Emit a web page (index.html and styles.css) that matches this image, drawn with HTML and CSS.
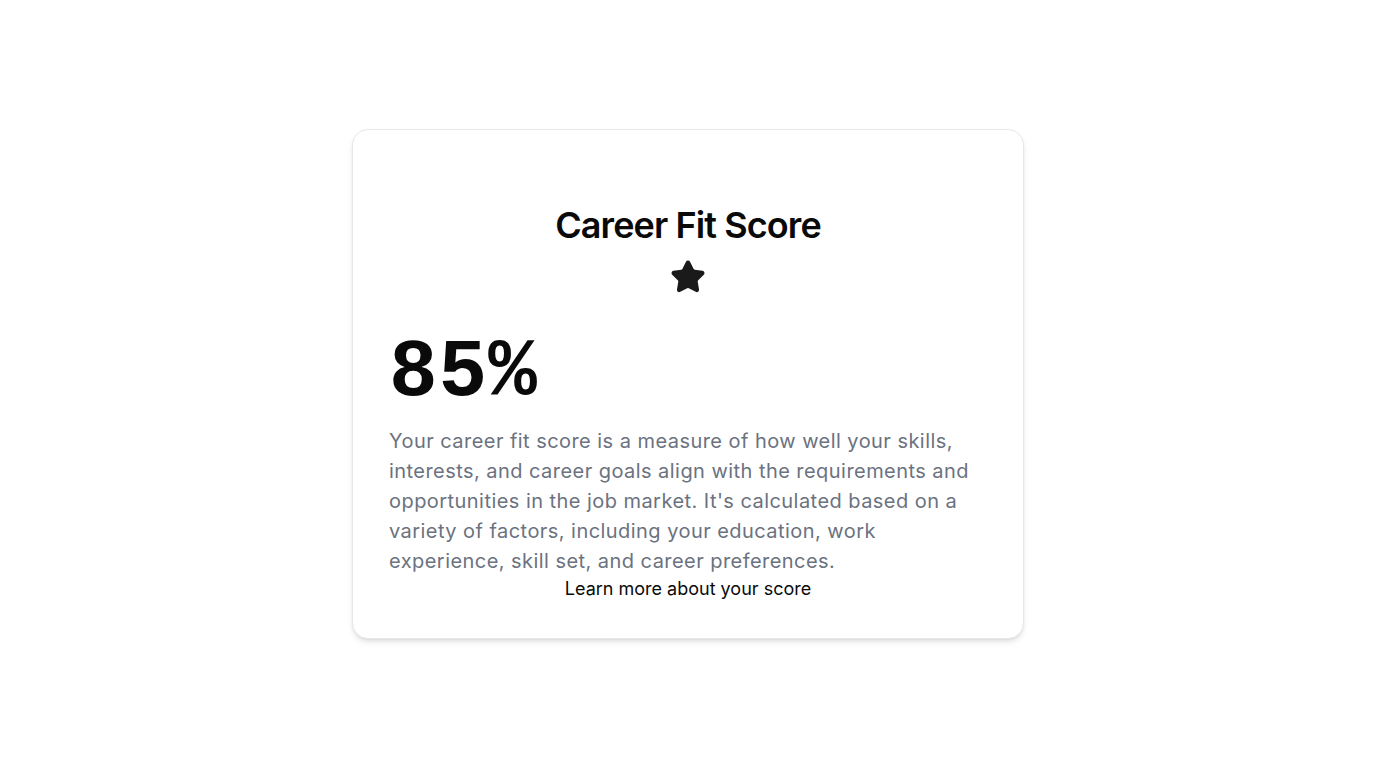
FILE: index.html
```html
<!DOCTYPE html>
<html lang="en">
<head>
<meta charset="utf-8">
<title>Career Fit Score</title>
<link rel="stylesheet" href="styles.css">
</head>
<body>
<main class="page">
  <section class="card">
    <header class="card-header">
      <h1 class="title">Career Fit Score</h1>
      <svg class="star" viewBox="0 0 24 24" aria-hidden="true">
        <path d="M11.525 2.295a.53.53 0 0 1 .95 0l2.31 4.679a2.123 2.123 0 0 0 1.595 1.16l5.166.756a.53.53 0 0 1 .294.904l-3.736 3.638a2.123 2.123 0 0 0-.611 1.878l.882 5.14a.53.53 0 0 1-.771.56l-4.618-2.428a2.122 2.122 0 0 0-1.973 0L6.396 21.010a.53.53 0 0 1-.77-.56l.881-5.139a2.122 2.122 0 0 0-.611-1.879L2.160 9.795a.53.53 0 0 1 .294-.906l5.165-.755a2.122 2.122 0 0 0 1.597-1.160z"/>
      </svg>
    </header>
    <div class="card-body">
      <div class="score">85%</div>
      <p class="desc">Your career fit score is a measure of how well your skills, interests, and career goals align with the requirements and opportunities in the job market. It's calculated based on a variety of factors, including your education, work experience, skill set, and career preferences.</p>
      <a class="learn" href="#">Learn more about your score</a>
    </div>
  </section>
</main>
</body>
</html>
```
FILE: styles.css
```css
* { box-sizing: border-box; }
html, body { margin: 0; padding: 0; background: #ffffff; }
body { font-family: Inter, "Noto Sans", sans-serif; color: #0a0a0a; }
.page {
  min-height: 768px;
  display: flex;
  align-items: center;
  justify-content: center;
}
.card {
  width: 672px;
  background: #fff;
  border: 1px solid #e5e7eb;
  border-radius: 16px;
  box-shadow: 0 4px 6px -1px rgba(0,0,0,0.1), 0 2px 4px -2px rgba(0,0,0,0.1);
  padding: 36px;
}
.card-header {
  display: flex;
  flex-direction: column;
  align-items: center;
  padding-top: 39px;
  gap: 14px;
}
.title {
  margin: 0;
  font-size: 36px;
  line-height: 40px;
  font-weight: 600;
  letter-spacing: -0.025em;
  color: #0a0a0a;
}
.star {
  width: 36px;
  height: 36px;
  fill: #1a1a1a;
  stroke: #1a1a1a;
  stroke-width: 2;
  stroke-linejoin: round;
}
.card-body {
  display: flex;
  flex-direction: column;
  align-items: stretch;
  margin-top: 38px;
}
.score {
  font-family: "Liberation Mono", monospace;
  font-weight: 700;
  font-size: 81px;
  line-height: 81px;
  letter-spacing: 1px;
  color: #0a0a0a;
}
.desc {
  margin: 12px 0 0;
  font-size: 20px;
  line-height: 30px;
  letter-spacing: 0.45px;
  color: #6b7280;
}
.learn {
  align-self: center;
  font-size: 18px;
  line-height: 26px;
  color: #0a0a0a;
  text-decoration: none;
}
```
